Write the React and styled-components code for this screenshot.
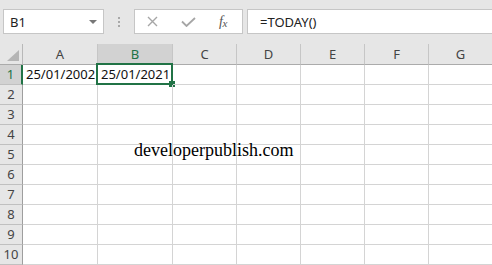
import React from "react";
import styled, { createGlobalStyle } from "styled-components";

const GREEN = "#217346";

const GlobalStyle = createGlobalStyle`
    html, body {
        margin: 0;
        padding: 0;
        background: #ffffff;
    }
    body {
        font-family: "Noto Sans", "Open Sans", sans-serif;
        overflow: hidden;
    }
`;

const Wrapper = styled.div`
    width: 492px;
    height: 265px;
    overflow: hidden;
    background: #ffffff;
`;

const Toolbar = styled.div`
    display: flex;
    align-items: flex-start;
    height: 44px;
    box-sizing: border-box;
    padding: 9px 0 0 3px;
    background: #e6e6e6;
`;

const NameBox = styled.div`
    width: 101px;
    height: 25px;
    box-sizing: border-box;
    display: flex;
    align-items: center;
    justify-content: space-between;
    padding: 0 6px 0 6px;
    background: #ffffff;
    border: 1px solid #c6c6c6;
    font-size: 13px;
    color: #222;
`;

const Caret = styled.span`
    width: 0;
    height: 0;
    border-left: 4px solid transparent;
    border-right: 4px solid transparent;
    border-top: 4px solid #777;
`;

const Dots = styled.div`
    display: flex;
    flex-direction: column;
    gap: 2px;
    margin: 8px 14px 0 14px;

    & > span {
        width: 2px;
        height: 2px;
        background: #a8a8a8;
    }
`;

const ButtonBox = styled.div`
    width: 109px;
    height: 25px;
    box-sizing: border-box;
    display: flex;
    align-items: center;
    gap: 23px;
    padding-left: 12px;
    background: #ffffff;
    border: 1px solid #c6c6c6;
`;

const Fx = styled.span`
    font-family: "Liberation Serif", serif;
    font-style: italic;
    font-size: 14px;
    color: #555;
    letter-spacing: -0.5px;

    & > sub {
        font-size: 11px;
        vertical-align: -1px;
    }
`;

const FormulaInput = styled.div`
    flex: 1;
    height: 25px;
    box-sizing: border-box;
    margin: 0 -2px 0 4px;
    display: flex;
    align-items: center;
    padding-left: 12px;
    background: #ffffff;
    border: 1px solid #c6c6c6;
    font-size: 13px;
    color: #222;
`;

const Sheet = styled.div`
    position: relative;
    display: grid;
    grid-template-columns: 23px 75px 75px repeat(5, 64px);
    grid-template-rows: 21px repeat(10, 20px);
`;

const Corner = styled.div`
    position: relative;
    box-sizing: border-box;
    background: #e6e6e6;
    border-right: 1px solid #b8b8b8;
    border-bottom: 1px solid #ababab;

    &::after {
        content: "";
        position: absolute;
        right: 3px;
        bottom: 3px;
        width: 0;
        height: 0;
        border-left: 12px solid transparent;
        border-bottom: 11px solid #b5b5b5;
    }
`;

const ColHeader = styled.div`
    box-sizing: border-box;
    display: flex;
    align-items: center;
    justify-content: center;
    font-size: 13px;
    color: ${(p) => (p.$active ? GREEN : "#444")};
    background: ${(p) => (p.$active ? "#d2d2d2" : "#e6e6e6")};
    border-right: 1px solid #c6c6c6;
    border-bottom: ${(p) => (p.$active ? `2px solid ${GREEN}` : "1px solid #ababab")};
`;

const RowHeader = styled.div`
    box-sizing: border-box;
    display: flex;
    align-items: flex-end;
    justify-content: center;
    padding-bottom: 1px;
    font-size: 13px;
    color: ${(p) => (p.$active ? GREEN : "#444")};
    background: ${(p) => (p.$active ? "#d2d2d2" : "#e6e6e6")};
    border-right: ${(p) => (p.$active ? `2px solid ${GREEN}` : "1px solid #9e9e9e")};
    border-bottom: 1px solid #c0c0c0;
`;

const Cell = styled.div`
    position: relative;
    box-sizing: border-box;
    display: flex;
    align-items: flex-end;
    padding: 0 0 1px 3px;
    font-size: 13px;
    color: #111;
    white-space: nowrap;
    border-right: 1px solid #d4d4d4;
    border-bottom: 1px solid #d4d4d4;
`;

const Selection = styled.div`
    position: absolute;
    top: -2px;
    left: -2px;
    right: -1px;
    bottom: -1px;
    border: 2px solid ${GREEN};
    pointer-events: none;
`;

const FillHandle = styled.div`
    position: absolute;
    right: -4px;
    bottom: -4px;
    width: 6px;
    height: 6px;
    background: ${GREEN};
`;

const Watermark = styled.div`
    position: absolute;
    left: 134px;
    top: 97px;
    font-family: "Liberation Serif", "Times New Roman", serif;
    font-size: 18px;
    line-height: 18px;
    color: #000;
`;

const columns = ["A", "B", "C", "D", "E", "F", "G"];
const rows = [1, 2, 3, 4, 5, 6, 7, 8, 9, 10];

const values = {
    A1: "25/01/2002",
    B1: "25/01/2021",
};

function CancelIcon() {
    return (
        <svg width="11" height="11" viewBox="0 0 11 11">
            <path d="M1 1 L10 10 M10 1 L1 10" stroke="#a6a6a6" strokeWidth="1.4" fill="none" />
        </svg>
    );
}

function EnterIcon() {
    return (
        <svg width="15" height="10" viewBox="0 0 15 10">
            <path d="M1 4.5 L5.5 9 L14 1" stroke="#a6a6a6" strokeWidth="1.8" fill="none" />
        </svg>
    );
}

function App() {
    return (
        <Wrapper>
            <GlobalStyle />
            <Toolbar>
                <NameBox>
                    <span>B1</span>
                    <Caret />
                </NameBox>
                <Dots>
                    <span />
                    <span />
                    <span />
                </Dots>
                <ButtonBox>
                    <CancelIcon />
                    <EnterIcon />
                    <Fx>
                        f<sub>x</sub>
                    </Fx>
                </ButtonBox>
                <FormulaInput>=TODAY()</FormulaInput>
            </Toolbar>

            <Sheet>
                <Corner />
                {columns.map((col) => (
                    <ColHeader key={col} $active={col === "B"}>
                        {col}
                    </ColHeader>
                ))}

                {rows.map((row) => (
                    <React.Fragment key={row}>
                        <RowHeader $active={row === 1}>{row}</RowHeader>
                        {columns.map((col) => {
                            const ref = col + row;
                            return (
                                <Cell key={ref}>
                                    {values[ref]}
                                    {ref === "B1" && (
                                        <Selection>
                                            <FillHandle />
                                        </Selection>
                                    )}
                                </Cell>
                            );
                        })}
                    </React.Fragment>
                ))}

                <Watermark>developerpublish.com</Watermark>
            </Sheet>
        </Wrapper>
    );
}

export default App;
